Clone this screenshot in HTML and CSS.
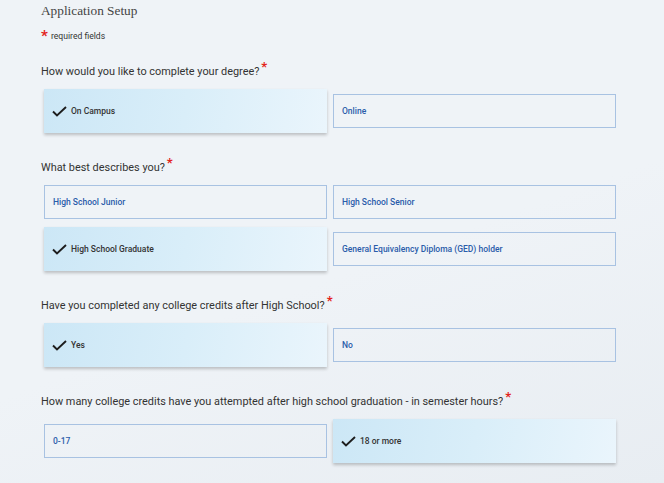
FILE: index.html
```html
<!DOCTYPE html>
<html lang="en">
<head>
    <meta charset="UTF-8">
    <meta name="viewport" content="width=device-width, initial-scale=1.0">
    <title>Application Setup</title>
    <link rel="stylesheet" href="styles.css">
</head>
<body>
    <div class="page">
        <h1 class="title">Application Setup</h1>
        <p class="required"><span class="star">*</span> required fields</p>

        <div class="question">How would you like to complete your degree?<span class="star">*</span></div>
        <div class="options">
            <div class="option selected">
                <svg class="check" width="15" height="11" viewBox="0 0 15 11"><path d="M1 5.5 L5 9.5 L14 1" fill="none" stroke="#1d1d1d" stroke-width="1.9"/></svg>
                On Campus
            </div>
            <div class="option">Online</div>
        </div>

        <div class="question">What best describes you?<span class="star">*</span></div>
        <div class="options">
            <div class="option">High School Junior</div>
            <div class="option">High School Senior</div>
            <div class="option selected">
                <svg class="check" width="15" height="11" viewBox="0 0 15 11"><path d="M1 5.5 L5 9.5 L14 1" fill="none" stroke="#1d1d1d" stroke-width="1.9"/></svg>
                High School Graduate
            </div>
            <div class="option">General Equivalency Diploma (GED) holder</div>
        </div>

        <div class="question">Have you completed any college credits after High School?<span class="star">*</span></div>
        <div class="options">
            <div class="option selected">
                <svg class="check" width="15" height="11" viewBox="0 0 15 11"><path d="M1 5.5 L5 9.5 L14 1" fill="none" stroke="#1d1d1d" stroke-width="1.9"/></svg>
                Yes
            </div>
            <div class="option">No</div>
        </div>

        <div class="question">How many college credits have you attempted after high school graduation - in semester hours?<span class="star">*</span></div>
        <div class="options">
            <div class="option">0-17</div>
            <div class="option selected">
                <svg class="check" width="15" height="11" viewBox="0 0 15 11"><path d="M1 5.5 L5 9.5 L14 1" fill="none" stroke="#1d1d1d" stroke-width="1.9"/></svg>
                18 or more
            </div>
        </div>
    </div>
</body>
</html>
```

FILE: styles.css
```css
body {
    margin: 0;
    font-family: Roboto, "Liberation Sans", Arial, sans-serif;
    background: linear-gradient(160deg, #eff3f7 0%, #eff3f7 55%, #e8edf2 100%);
    min-height: 100vh;
    color: #333;
}
.page {
    padding: 0 0 0 41px;
}
.title {
    font-family: "Liberation Serif", "DejaVu Serif", serif;
    font-weight: normal;
    font-size: 13.3px;
    line-height: 20px;
    color: #444;
    margin: 1px 0 0;
}
.required {
    font-size: 8.6px;
    line-height: 16px;
    margin: 7px 0 0;
    color: #333;
}
.required .star {
    font-size: 15px;
    vertical-align: -2px;
    margin-right: 1px;
}
.star {
    color: #e3231b;
    font-weight: bold;
}
.question {
    font-size: 10.9px;
    line-height: 20px;
    margin: 25px 0 7px;
    color: #333;
}
.required + .question {
    margin-top: 18px;
}
.question .star {
    font-size: 13px;
    position: relative;
    top: -4px;
    margin-left: 2px;
    line-height: 0;
}
.options {
    display: flex;
    flex-wrap: wrap;
    align-items: center;
    gap: 8px 6px;
    width: 572px;
    padding-left: 3px;
}
.option {
    box-sizing: border-box;
    width: 283px;
    height: 34px;
    border: 1px solid #a8c2e2;
    padding: 0 8px;
    display: flex;
    align-items: center;
    font-size: 8.5px;
    font-weight: 500;
    color: #2a5caa;
}
.option.selected {
    height: 44px;
    border: none;
    background: linear-gradient(100deg, #cce7f6 0%, #d9eef9 50%, #eaf5fc 100%);
    box-shadow: 0 2px 3px rgba(0, 0, 0, 0.22);
    color: #333;
}
.check {
    margin-right: 4px;
    flex: none;
}
```
